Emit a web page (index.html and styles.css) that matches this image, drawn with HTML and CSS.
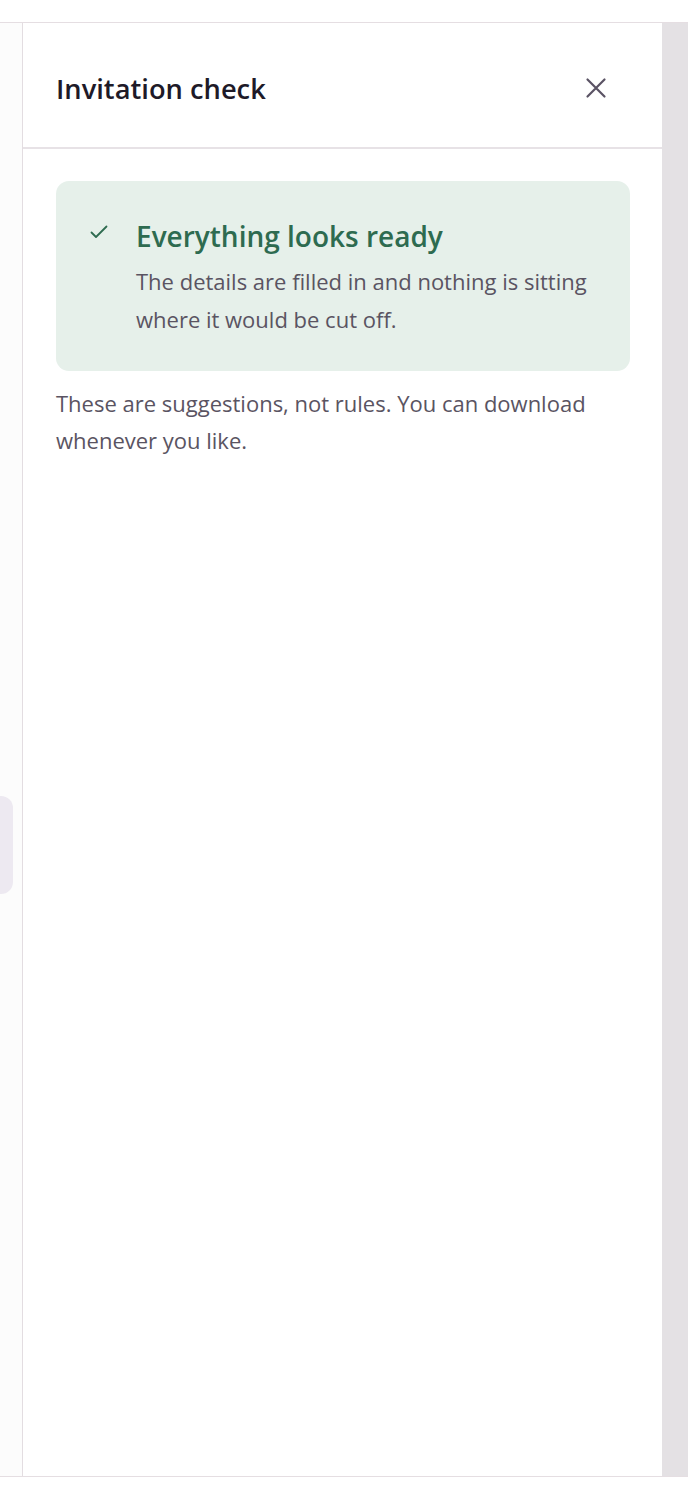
FILE: index.html
```html
<!DOCTYPE html>
<html lang="en">
<head>
<meta charset="utf-8">
<title>Invitation check</title>
<link rel="stylesheet" href="styles.css">
</head>
<body>
<div class="frame">
  <div class="left">
    <div class="left-tab"></div>
  </div>
  <aside class="panel">
    <header class="panel-head">
      <h2 class="panel-title">Invitation check</h2>
      <button class="close" aria-label="Close">
        <svg width="22" height="22" viewBox="0 0 22 22"><path d="M2.5 2.5L19.5 19.5M19.5 2.5L2.5 19.5" stroke="#5a5364" stroke-width="2.2" stroke-linecap="round"/></svg>
      </button>
    </header>
    <div class="panel-body">
      <div class="ok-card">
        <svg class="ok-icon" width="18" height="14" viewBox="0 0 18 14"><path d="M1.5 7.5L6 12L16.5 1.5" fill="none" stroke="#2e6b50" stroke-width="1.8" stroke-linecap="round" stroke-linejoin="round"/></svg>
        <div class="ok-text">
          <h3 class="ok-title">Everything looks ready</h3>
          <p class="ok-desc">The details are filled in and nothing is sitting where it would be cut off.</p>
        </div>
      </div>
      <p class="note">These are suggestions, not rules. You can download whenever you like.</p>
    </div>
  </aside>
  <div class="rail"></div>
</div>
</body>
</html>
```
FILE: styles.css
```css
* { box-sizing: border-box; }
html, body { margin: 0; padding: 0; background: #ffffff; }
body { font-family: "Open Sans", Lato, sans-serif; }
.frame {
  margin-top: 22px;
  height: 1455px;
  border-top: 1px solid #e5dee2;
  border-bottom: 1px solid #e5dee2;
  display: flex;
}
.left {
  width: 23px;
  background: #fcfcfc;
  border-right: 1px solid #e3dde1;
  padding-top: 773px;
}
.left-tab {
  width: 13px;
  height: 98px;
  background: #ede9f1;
  border-radius: 0 12px 12px 0;
}
.panel {
  width: 639px;
  background: #ffffff;
  display: flex;
  flex-direction: column;
}
.panel-head {
  height: 126px;
  border-bottom: 2px solid #e7e2e6;
  display: flex;
  align-items: center;
  justify-content: space-between;
  padding: 6px 55px 0 33px;
}
.panel-title {
  margin: 0;
  font-size: 27.3px;
  font-weight: 600;
  color: #1e1a28;
}
.close {
  border: 0;
  background: none;
  padding: 0;
  width: 22px;
  height: 22px;
  display: flex;
}
.panel-body {
  padding: 32px 32px 0 33px;
}
.ok-card {
  background: #e6f0ea;
  border-radius: 13px;
  padding: 42px 20px 33px 34px;
  display: flex;
  gap: 28px;
  align-items: flex-start;
}
.ok-icon { margin-top: 2px; flex: none; }
.ok-title {
  margin: 0;
  font-size: 28px;
  font-weight: 600;
  color: #2e6b50;
  line-height: 34px;
  margin-top: -4px;
}
.ok-desc {
  margin: 9px 0 0;
  font-size: 22px;
  line-height: 38px;
  color: #5a5462;
}
.note {
  margin: 14px 0 0;
  font-size: 22px;
  line-height: 37px;
  color: #5a5462;
}
.rail {
  flex: 1;
  background: #e4e1e4;
}
```
